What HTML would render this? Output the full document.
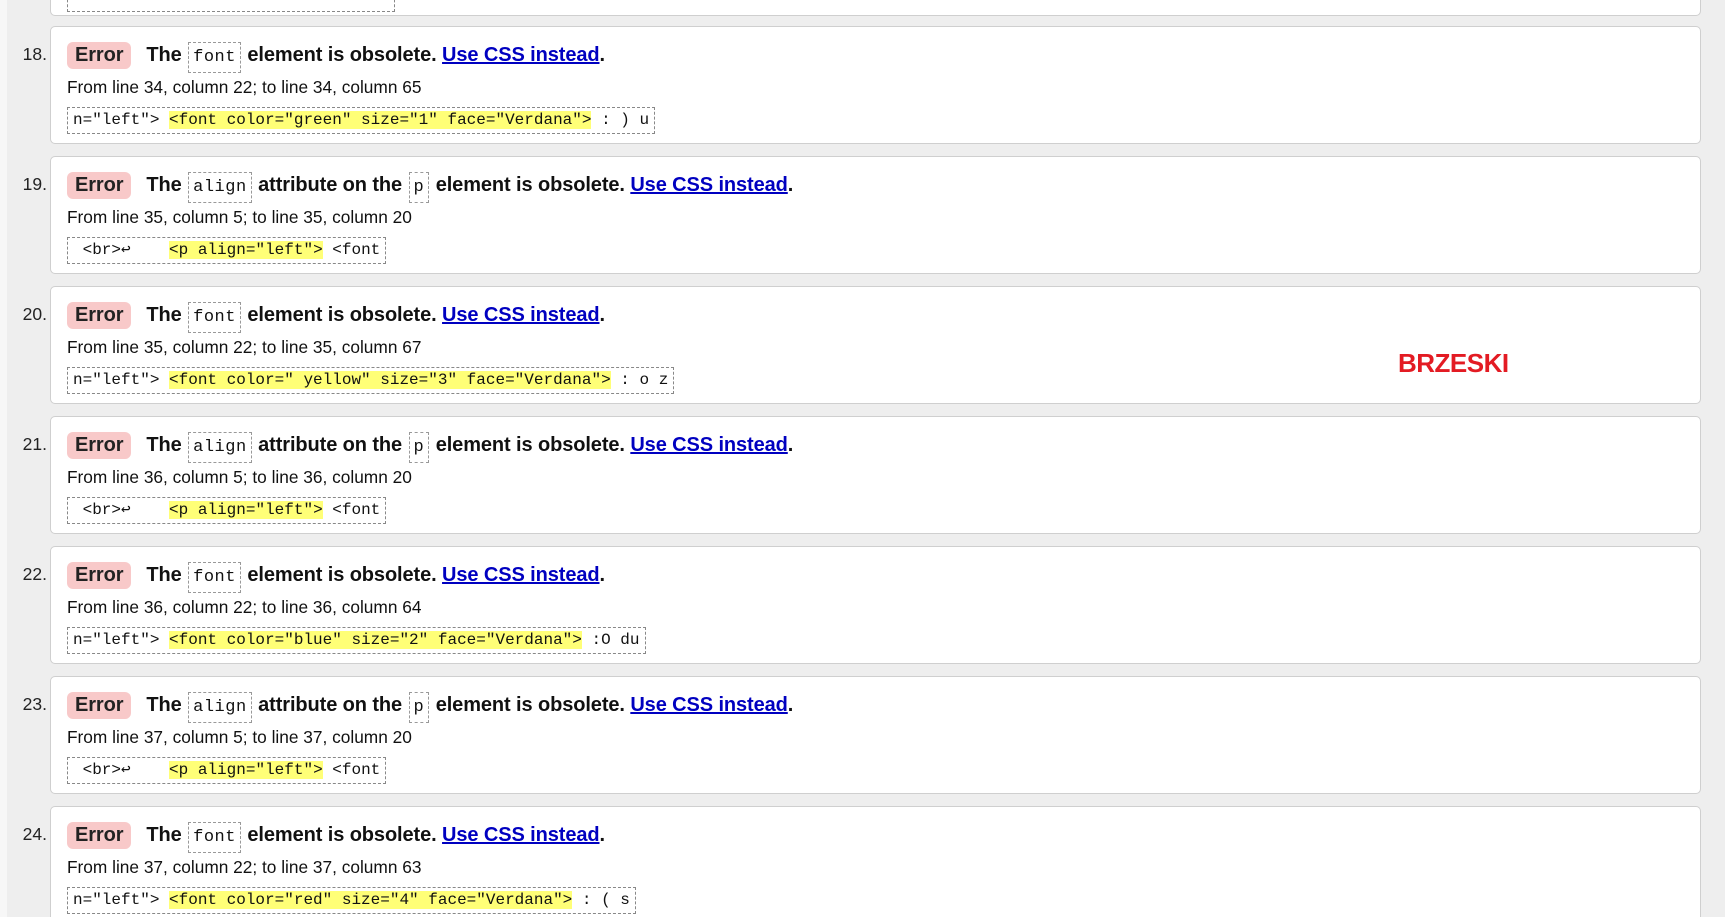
<!DOCTYPE html>
<html style="overflow:hidden;height:917px"><head><meta charset="utf-8"><style>
body{margin:0;width:1725px;height:917px;overflow:hidden;background:#eeeeee;font-family:"Liberation Sans",Arial,sans-serif;position:relative}
.strip{position:absolute;left:0;top:0;width:7px;height:917px;background:#f7f7f7}
.box{position:absolute;left:50px;width:1651px;height:118px;background:#fff;border:1px solid #cfcfcf;border-radius:5px;box-sizing:border-box}
.num{position:absolute;left:-32px;top:17px;font-size:17.5px;color:#222;width:28px;text-align:right}
.t{position:absolute;left:16px;top:14px;font-size:20px;font-weight:bold;white-space:nowrap;color:#111;line-height:28px;letter-spacing:-0.1px}
.err{display:inline-block;background:#f8c9c9;border-radius:6px;padding:0 8px;margin-right:15px;line-height:27px;color:#222}
.c{font-family:"Liberation Mono",monospace;font-weight:normal;font-size:17px;border:1px dashed #999;padding:1px 4px;display:inline-block;line-height:27px;margin:0 1px;letter-spacing:0.5px}
a{color:#0000c0;text-decoration:underline}
.f{position:absolute;left:16px;top:50px;font-size:17.3px;color:#111;white-space:nowrap}
.code{position:absolute;left:16px;top:80px;font-family:"Liberation Mono",monospace;font-size:16px;border:1px dashed #888;padding:0 5px;line-height:25px;white-space:pre;color:#111}
.h{background:#ffff77}
</style></head><body>
<div class="strip"></div>
<div class="box" style="top:-104px;height:120px"><div class="code" style="top:88px;width:316px">&nbsp;</div></div>

<div class="box" style="top:26px"><div class="num">18.</div><div class="t"><span class="err">Error</span>The <span class="c">font</span> element is obsolete. <a>Use CSS instead</a>.</div><div class="f">From line 34, column 22; to line 34, column 65</div><div class="code">n="left"&gt; <span class="h">&lt;font color="green" size="1" face="Verdana"&gt;</span> : ) u</div></div>

<div class="box" style="top:156px"><div class="num">19.</div><div class="t"><span class="err">Error</span>The <span class="c">align</span> attribute on the <span class="c">p</span> element is obsolete. <a>Use CSS instead</a>.</div><div class="f">From line 35, column 5; to line 35, column 20</div><div class="code"> &lt;br&gt;↩    <span class="h">&lt;p align="left"&gt;</span> &lt;font</div></div>

<div class="box" style="top:286px"><div class="num">20.</div><div class="t"><span class="err">Error</span>The <span class="c">font</span> element is obsolete. <a>Use CSS instead</a>.</div><div class="f">From line 35, column 22; to line 35, column 67</div><div class="code">n="left"&gt; <span class="h">&lt;font color=" yellow" size="3" face="Verdana"&gt;</span> : o z</div>
<div style="position:absolute;left:1347px;top:61px;color:#e31b23;font-weight:bold;font-size:26px;font-family:'Liberation Sans',sans-serif;letter-spacing:-0.5px">BRZESKI</div></div>

<div class="box" style="top:416px"><div class="num">21.</div><div class="t"><span class="err">Error</span>The <span class="c">align</span> attribute on the <span class="c">p</span> element is obsolete. <a>Use CSS instead</a>.</div><div class="f">From line 36, column 5; to line 36, column 20</div><div class="code"> &lt;br&gt;↩    <span class="h">&lt;p align="left"&gt;</span> &lt;font</div></div>

<div class="box" style="top:546px"><div class="num">22.</div><div class="t"><span class="err">Error</span>The <span class="c">font</span> element is obsolete. <a>Use CSS instead</a>.</div><div class="f">From line 36, column 22; to line 36, column 64</div><div class="code">n="left"&gt; <span class="h">&lt;font color="blue" size="2" face="Verdana"&gt;</span> :O du</div></div>

<div class="box" style="top:676px"><div class="num">23.</div><div class="t"><span class="err">Error</span>The <span class="c">align</span> attribute on the <span class="c">p</span> element is obsolete. <a>Use CSS instead</a>.</div><div class="f">From line 37, column 5; to line 37, column 20</div><div class="code"> &lt;br&gt;↩    <span class="h">&lt;p align="left"&gt;</span> &lt;font</div></div>

<div class="box" style="top:806px;height:111px;border-bottom:none;border-radius:5px 5px 0 0"><div class="num">24.</div><div class="t"><span class="err">Error</span>The <span class="c">font</span> element is obsolete. <a>Use CSS instead</a>.</div><div class="f">From line 37, column 22; to line 37, column 63</div><div class="code">n="left"&gt; <span class="h">&lt;font color="red" size="4" face="Verdana"&gt;</span> : ( s</div></div>
</body></html>
